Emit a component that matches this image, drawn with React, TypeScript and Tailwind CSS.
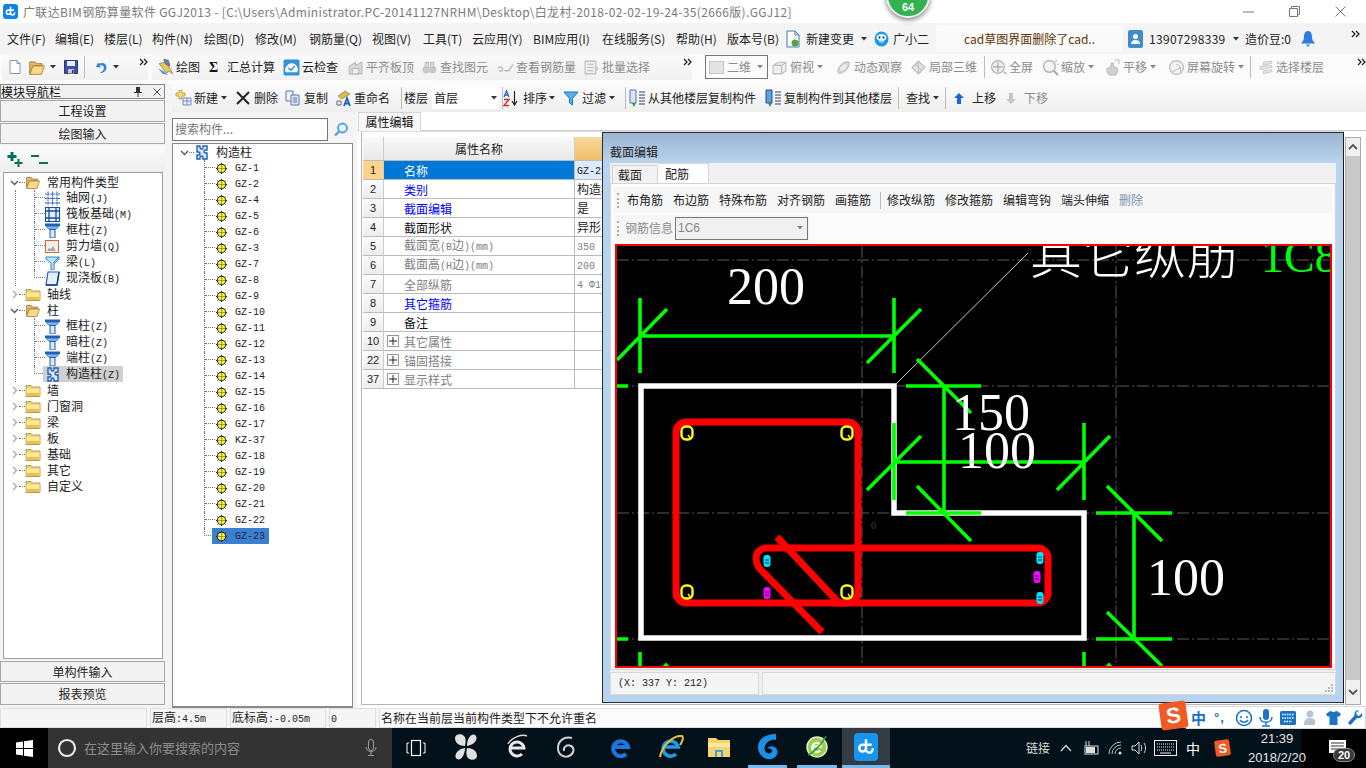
import React from "react";

const FONT = '"Noto Sans CJK SC","Liberation Sans",sans-serif';

function Sim({ t, className = "" }: { t: string; className?: string }) {
  const parts = t.match(/[\u3000-\u9fff]+|[^\u3000-\u9fff]+/g) || [];
  return (
    <span className={"whitespace-nowrap text-[12px] leading-[16px] " + className}>
      {parts.map((p, i) =>
        /[\u3000-\u9fff]/.test(p) ? (
          <span key={i} className="text-[12px]">{p}</span>
        ) : (
          <span key={i} className="text-[10px] font-['Liberation_Mono']">{p}</span>
        )
      )}
    </span>
  );
}

type S = { s?: number };
const Svg = ({ s = 16, children }: S & { children: React.ReactNode }) => (
  <svg width={s} height={s} viewBox="0 0 16 16" className="shrink-0">{children}</svg>
);
const Caret = () => (
  <svg width="6" height="4" viewBox="0 0 6 4" className="shrink-0"><path d="M0 0h6L3 3.5z" fill="#333" /></svg>
);
const CaretG = () => (
  <svg width="6" height="4" viewBox="0 0 6 4" className="shrink-0"><path d="M0 0h6L3 3.5z" fill="#888" /></svg>
);
const More = () => (
  <svg width="9" height="8" viewBox="0 0 9 8" className="shrink-0"><path d="M1 1l3 3-3 3M5 1l3 3-3 3" fill="none" stroke="#222" strokeWidth="1.3" /></svg>
);
const Doc = () => <Svg><path d="M3 1.5h7l3 3v10H3z" fill="#fff" stroke="#8a99a8" /><path d="M10 1.5v3h3" fill="#dde" stroke="#8a99a8" /></Svg>;
const FolderOpen = ({ s = 18 }: S) => (
  <Svg s={s}><path d="M1.5 3.5h5l1 1.5h5v2h-8l-3 7z" fill="#e3b860" stroke="#a57f32" strokeWidth=".8" /><path d="M4.5 7h10l-2.5 7.5H1.5z" fill="#f6d98b" stroke="#a57f32" strokeWidth=".8" /></Svg>
);
const Folder = ({ s = 16 }: S) => (
  <Svg s={s}><path d="M1 3.5h5l1.5 1.5H15v9.5H1z" fill="#f4cf6a" stroke="#a98a3a" strokeWidth=".8" /><path d="M1.5 6.5h13V14h-13z" fill="#fbe9a4" /><path d="M1.5 11h13v3h-13z" fill="#f0bf45" /></Svg>
);
const Save = () => (
  <Svg><path d="M1.5 1.5h13v13h-13z" fill="#3f4fa8" stroke="#2c3575" /><path d="M4 2h8v5H4z" fill="#e8ecf6" /><path d="M5 10h6v4.5H5z" fill="#c0c7d8" /><path d="M9 11h1.5v3H9z" fill="#333" /></Svg>
);
const Undo = () => (
  <Svg><path d="M5 3.5l-2 4.5 5 .5L6.5 6.6C9 5.6 11.5 7 10.8 9.8 10.4 11.4 9 13 7 14c4 .2 6.5-2.5 6.5-5.5C13.5 4.8 9.8 3 6 4.8z" fill="#2e84d6" /></Svg>
);
const Pencil = () => (
  <Svg s={18}><path d="M6 1l4 1 1.5 5-4-1z" fill="#5f7fb3" stroke="#345" strokeWidth=".5" /><path d="M2 5l6 8 3-1 3 2-2-4-2-3-4-3z" fill="#e9c65b" stroke="#7a6d3a" strokeWidth=".6" /><path d="M1 9l4 5 5 1-4-3z" fill="#4a90d9" /></Svg>
);
const Cloud = () => (
  <Svg s={17}><rect x=".5" y=".5" width="15" height="15" rx="1.5" fill="#2f94dc" /><path d="M2 11c0-4 3-7 6-7s6 2.5 6 6.5c0 1-1 2-2 2H4c-1 0-2-.5-2-1.500z" fill="#fff" /><path d="M5 8.500l2.500 2L11 6.500" fill="none" stroke="#2f94dc" strokeWidth="1.400" /></Svg>
);
const GrayIco = ({ v = 0 }: { v?: number }) => (
  <Svg s={17}>
    {v === 0 && <><path d="M2 14V7l6-4v3l6-3v11z" fill="#d8d8d8" stroke="#bbb" /><path d="M5 9h6v5H5z" fill="#eee" stroke="#bbb" /></>}
    {v === 1 && <><circle cx="5" cy="10" r="3.500" fill="#c9c9c9" /><circle cx="11" cy="10" r="3.500" fill="#c9c9c9" /><path d="M4 3h3v5H4zM9 3h3v5H9z" fill="#ddd" stroke="#bbb" /></>}
    {v === 2 && <><path d="M1 9c1-2 3-2 4 0s-1 3-3 2M15 5l-4 6H7" fill="none" stroke="#bbb" strokeWidth="1.300" /></>}
    {v === 3 && <><path d="M2 2h10v12H2z" fill="#eee" stroke="#bbb" /><path d="M4 5h6M4 8h6M4 11h6" stroke="#bbb" /><path d="M12 6l3 3-3 3" fill="#ccc" /></>}
    {v === 4 && <><path d="M2 6l5-3h7v8l-4 3H2zM2 6h8v8M10 6l4-3" fill="#eee" stroke="#bbb" /></>}
    {v === 5 && <><ellipse cx="8" cy="8" rx="7" ry="3.200" transform="rotate(-45 8 8)" fill="#d6d6d6" stroke="#bbb" /><ellipse cx="8" cy="8" rx="3.500" ry="2" transform="rotate(-45 8 8)" fill="#eee" /></>}
    {v === 6 && <><path d="M2 8l6-6 6 6-6 6z" fill="#e4e4e4" stroke="#bbb" /><path d="M5 5l6 6M8 2v12" stroke="#c4c4c4" /></>}
    {v === 7 && <><circle cx="7.500" cy="7.500" r="6" fill="#f0f0f0" stroke="#aaa" /><path d="M7.500 3v9M3 7.500h9M13 12l2.500 2.500" stroke="#aaa" strokeWidth="1.200" /></>}
    {v === 8 && <><circle cx="7" cy="7" r="5.500" fill="#f3f3f3" stroke="#bbb" strokeWidth="1.500" /><path d="M11 11l4 4" stroke="#aaa" strokeWidth="2" /><path d="M12 3l2-2M14 5h2" stroke="#bbb" /></>}
    {v === 9 && <><path d="M5 15c-2-2-3-4-2-6l3-1 1-4 2 .5 0 3 3 .5 1 3-2 4z" fill="#d0d0d0" stroke="#bbb" /><path d="M10 1h4v4" fill="none" stroke="#bbb" /></>}
    {v === 10 && <><circle cx="8" cy="8" r="6.500" fill="#f3f3f3" stroke="#bbb" strokeWidth="1.200" /><path d="M8 5a3 3 0 013 3M4 12l8-4v6" fill="none" stroke="#c5c5c5" /></>}
    {v === 11 && <><path d="M6 3l8-1v2L6 6zM3 7l11-1v2L3 10zM6 11l8-1v2l-8 2z" fill="#e2e2e2" stroke="#bbb" strokeWidth=".6" /></>}
  </Svg>
);
const Sep = () => <div className="w-px h-[22px] bg-[#bdbdbd] shrink-0" />;

function Tool({ icon, label, w, gray, caret }: { icon: React.ReactNode; label: string; w: string; gray?: boolean; caret?: boolean }) {
  return (
    <div className={"flex items-center shrink-0 " + w}>
      <span className="w-[19px] shrink-0">{icon}</span>
      <span className={"text-[12px] whitespace-nowrap " + (gray ? "text-[#8c8c8c]" : "text-[#222]")}>{label}</span>
      {caret && <span className="ml-[3px]">{gray ? <CaretG /> : <Caret />}</span>}
    </div>
  );
}

function Top() {
  const menus: [string, string][] = [
    ["文件(F)", "w-[48px]"], ["编辑(E)", "w-[49px]"], ["楼层(L)", "w-[48px]"], ["构件(N)", "w-[52px]"], ["绘图(D)", "w-[51px]"],
    ["修改(M)", "w-[54px]"], ["钢筋量(Q)", "w-[63px]"], ["视图(V)", "w-[51px]"], ["工具(T)", "w-[49px]"], ["云应用(Y)", "w-[61px]"],
    ["BIM应用(I)", "w-[69px]"], ["在线服务(S)", "w-[74px]"], ["帮助(H)", "w-[51px]"], ["版本号(B)", "w-[60px]"],
  ];
  return (
    <>
      <div className="h-[23px] bg-white flex items-center shrink-0 relative">
        <div className="ml-[3px] w-[15px] h-[15px] rounded-[3px] bg-[#0e84e8] flex items-center justify-center">
          <AppMark s={11} />
        </div>
        <span className="ml-[5px] text-[12px] text-[#7a7a7a] whitespace-nowrap tracking-[0.34px]">广联达BIM钢筋算量软件 GGJ2013 - [C:\Users\Administrator.PC-20141127NRHM\Desktop\白龙村-2018-02-02-19-24-35(2666版).GGJ12]</span>
        <div className="ml-auto flex items-center mr-[20px] gap-[35px]">
          <svg width="11" height="2"><path d="M0 1h11" stroke="#777" /></svg>
          <svg width="11" height="11" viewBox="0 0 11 11"><path d="M2.500 2.500V.5h8v8h-2M.5 2.500h8v8h-8z" fill="none" stroke="#777" /></svg>
          <svg width="11" height="11" viewBox="0 0 11 11"><path d="M.5.5l10 10M10.500.5l-10 10" stroke="#777" /></svg>
        </div>
      </div>
      <div className="h-[31px] bg-[#f4f4f4] flex items-center shrink-0 pl-[7px]">
        {menus.map(([m, w]) => (
          <span key={m} className={"text-[12px] text-[#222] whitespace-nowrap shrink-0 " + w}>{m}</span>
        ))}
        <svg width="16" height="18" viewBox="0 0 16 18" className="shrink-0 ml-[-2px]"><path d="M2 1h8l4 4v12H2z" fill="#fff" stroke="#3d7bb8" /><path d="M10 1v4h4" fill="none" stroke="#3d7bb8" /><circle cx="10" cy="13" r="3.500" fill="#56a23d" /></svg>
        <span className="ml-[5px] w-[48px] text-[12px] text-[#222] whitespace-nowrap shrink-0">新建变更</span>
        <span className="ml-[7px] mr-[7px]"><Caret /></span>
        <svg width="15" height="16" viewBox="0 0 15 16" className="shrink-0"><ellipse cx="7.500" cy="8" rx="7" ry="7.500" fill="#169be8" /><ellipse cx="7.500" cy="6.500" rx="5" ry="3.500" fill="#e8f8ff" /><circle cx="5.500" cy="6.500" r="1" fill="#123" /><circle cx="9.500" cy="6.500" r="1" fill="#123" /><path d="M5 10c1.500 1.500 3.500 1.500 5 0" stroke="#fff" fill="none" /></svg>
        <span className="ml-[4px] w-[36px] text-[12px] text-[#222] whitespace-nowrap shrink-0">广小二</span>
        <div className="ml-[7px] w-[187px] h-[27px] bg-[#fafafa] rounded-[2px] flex items-center justify-center shrink-0">
          <span className="text-[12px] text-[#663300] whitespace-nowrap">cad草图界面删除了cad..</span>
        </div>
        <div className="ml-[5px] w-[15px] h-[18px] bg-[#3e8ecb] rounded-[2px] flex items-center justify-center shrink-0">
          <svg width="11" height="12" viewBox="0 0 11 12"><circle cx="5.500" cy="3.500" r="2.500" fill="#fff" /><path d="M1 11c0-3 2-4 4.500-4S10 8 10 11z" fill="#fff" /></svg>
        </div>
        <span className="ml-[6px] w-[76px] text-[12px] text-[#222] whitespace-nowrap tracking-[0.3px] shrink-0">13907298339</span>
        <span className="ml-[8px] mr-[6px]"><Caret /></span>
        <span className="text-[12px] w-[46px] text-[#222] whitespace-nowrap shrink-0">造价豆:0</span>
        <svg width="14" height="16" viewBox="0 0 14 16" className="ml-[10px] shrink-0"><path d="M7 0c-3 0-4 3-4 6 0 3-1 4-3 6.500h14C12 10 11 9 11 6c0-3-1-6-4-6z" fill="#2e7be0" /><path d="M5 13.500h4L7 16z" fill="#2e7be0" /></svg>
        <span className="ml-[36px] mb-[10px]"><More /></span>
      </div>
      <div className="h-[30px] bg-[#fbfbfb] shrink-0 flex items-center pb-[4px]">
        <div className="flex items-center h-[26px] w-[146px] ml-[2px] bg-gradient-to-b from-[#fafafa] to-[#f1f1f1] rounded-[2px] pl-[5px]">
          <span className="w-[21px]"><Doc /></span>
          <span className="w-[22px]"><FolderOpen /></span>
          <span className="w-[14px]"><Caret /></span>
          <span className="w-[21px]"><Save /></span>
          <Sep />
          <span className="ml-[8px] w-[20px]"><Undo /></span>
          <Caret />
          <span className="ml-[20px] mb-[10px]"><More /></span>
        </div>
        <div className="flex items-center h-[26px] w-[545px] ml-[4px] bg-gradient-to-b from-[#fafafa] to-[#f1f1f1] rounded-[2px] pl-[5px]">
          <Tool icon={<Pencil />} label="绘图" w="w-[52px]" />
          <div className="flex items-center shrink-0 w-[74px]">
            <span className="w-[18px] text-[14px] font-bold text-[#111] font-['Liberation_Serif']">Σ</span>
            <span className="text-[12px] text-[#222] whitespace-nowrap">汇总计算</span>
          </div>
          <Tool icon={<Cloud />} label="云检查" w="w-[64px]" />
          <Tool icon={<GrayIco v={0} />} label="平齐板顶" w="w-[74px]" gray />
          <Tool icon={<GrayIco v={1} />} label="查找图元" w="w-[76px]" gray />
          <Tool icon={<GrayIco v={2} />} label="查看钢筋量" w="w-[86px]" gray />
          <Tool icon={<GrayIco v={3} />} label="批量选择" w="w-[100px]" gray />
          <span className="mb-[10px]"><More /></span>
        </div>
        <div className="ml-[13px] w-[63px] h-[24px] border border-[#777] flex items-center pl-[3px] shrink-0">
          <span className="w-[15px] h-[13px] bg-[#e3e3e3] border border-[#c4c4c4] shrink-0" />
          <span className="ml-[3px] text-[12px] text-[#8c8c8c]">二维</span>
          <span className="ml-[6px]"><CaretG /></span>
        </div>
        <div className="flex items-center ml-[3px]">
          <Tool icon={<GrayIco v={4} />} label="俯视" w="w-[64px]" gray caret />
          <Tool icon={<GrayIco v={5} />} label="动态观察" w="w-[75px]" gray />
          <Tool icon={<GrayIco v={6} />} label="局部三维" w="w-[74px]" gray />
          <Sep />
          <span className="w-[5px]" />
          <Tool icon={<GrayIco v={7} />} label="全屏" w="w-[52px]" gray />
          <Tool icon={<GrayIco v={8} />} label="缩放" w="w-[62px]" gray caret />
          <Tool icon={<GrayIco v={9} />} label="平移" w="w-[64px]" gray caret />
          <Tool icon={<GrayIco v={10} />} label="屏幕旋转" w="w-[82px]" gray caret />
          <Sep />
          <span className="w-[6px]" />
          <Tool icon={<GrayIco v={11} />} label="选择楼层" w="w-[100px]" gray />
          <span className="mb-[10px]"><More /></span>
        </div>
      </div>
    </>
  );
}

function AppMark({ s = 11 }: { s?: number }) {
  return (
    <svg width={s} height={s} viewBox="0 0 16 16">
      <path d="M8 1v8M8 9a3 3 0 01-6 0 3 3 0 013-3h8M8 9c0 2 1 4 3 4s3-2 3-4" fill="none" stroke="#fff" strokeWidth="2.200" />
    </svg>
  );
}

const SideBtn = ({ t, h }: { t: string; h: string }) => (
  <div className={"w-[165px] bg-[#f2f2f2] border border-[#a8a8a8] flex items-center justify-center text-[12px] text-[#222] shrink-0 " + h}>{t}</div>
);

const TCol = () => (
  <svg width="15" height="15" viewBox="0 0 15 15" className="shrink-0"><path d="M0 .5h15v2.500H0z" fill="#1f5fb8" /><path d="M1 3.500h13l-3 3H4z" fill="#7fb0ea" stroke="#1f5fb8" strokeWidth=".6" /><path d="M5 6.500h5V15H5z" fill="#d8e8fa" stroke="#1f5fb8" /></svg>
);
const Puzzle = () => (
  <svg width="15" height="15" viewBox="0 0 15 15" className="shrink-0"><path d="M3 1h3v1.500a1.500 1.500 0 003 0V1h4v4h-1.500a1.500 1.500 0 000 3H13v6H9v-1.500a1.500 1.500 0 00-3 0V14H3v-4h1.500a1.500 1.500 0 000-3H3z" fill="#dbe9f8" stroke="#1f5fb8" strokeWidth="1.400" /></svg>
);
const Grid1 = () => (
  <svg width="15" height="15" viewBox="0 0 15 15" className="shrink-0"><path d="M3 .5v14M7.500 .5v14M12 .5v14M0 3h15M0 7.500h15M0 12h15" stroke="#2b63b5" strokeDasharray="2 .6" /></svg>
);
const Raft = () => (
  <svg width="15" height="15" viewBox="0 0 15 15" className="shrink-0"><rect x=".5" y=".5" width="14" height="14" fill="#e7f0fa" stroke="#174f9f" /><path d="M.5 4h14M.5 11h14M4 .5v14M11 .5v14" stroke="#174f9f" strokeWidth="1.300" /></svg>
);
const Wall = () => (
  <svg width="15" height="15" viewBox="0 0 15 15" className="shrink-0"><rect x=".5" y="1.500" width="13" height="12" fill="#f4efe9" stroke="#c66b3d" /><path d="M2 12l2-3 2 1 2-3 3 5z" fill="#a9a9a9" /></svg>
);
const Beam = () => (
  <svg width="15" height="15" viewBox="0 0 15 15" className="shrink-0"><path d="M1 2h13v2L9 9v6H6V8L1 4z" fill="#bfe1f7" stroke="#2c87c9" /><path d="M14 2L8 8" stroke="#2c87c9" /></svg>
);
const Slab = () => (
  <svg width="15" height="15" viewBox="0 0 15 15" className="shrink-0"><path d="M3 1h11l-2 13H1z" fill="#e6f0fb" stroke="#1f5fb8" strokeWidth="1.200" /><path d="M1 14h11l2-13" fill="none" stroke="#0f3f8f" strokeWidth="1.500" /></svg>
);
const Chevron = ({ open }: { open?: boolean }) => (
  <svg width="9" height="9" viewBox="0 0 9 9" className="shrink-0">
    {open ? <path d="M1 3l3.500 3.500L8 3" fill="none" stroke="#555" strokeWidth="1.300" /> : <path d="M3 1l3.500 3.500L3 8" fill="none" stroke="#aaa" strokeWidth="1.300" />}
  </svg>
);
const Gear = () => (
  <svg width="11" height="11" viewBox="0 0 11 11" className="shrink-0">
    <circle cx="5.500" cy="5.500" r="4.700" fill="#222" />
    <path d="M5.500 0v11M0 5.500h11M1.500 1.500l8 8M9.500 1.500l-8 8" stroke="#222" />
    <circle cx="5.500" cy="5.500" r="3.700" fill="#f8f23a" />
    <path d="M5.500 2v7M2 5.500h7" stroke="#555" strokeWidth=".5" />
  </svg>
);

function Branch({ last }: { last?: boolean }) {
  return (
    <div className={"w-[11px] h-[16px] shrink-0 flex flex-col " + (last ? "" : "border-l border-dotted border-[#777]")}>
      <div className={"h-[8px] border-b border-dotted border-[#777] " + (last ? "border-l" : "")} />
    </div>
  );
}
function Kid({ icon, t, last, sel }: { icon: React.ReactNode; t: string; last?: boolean; sel?: boolean }) {
  return (
    <div className="h-[16px] flex items-center">
      <Branch last={last} />
      <div className={"flex items-center h-[16px] pr-[3px] " + (sel ? "bg-[#d0d0d0] -ml-[2px] pl-[2px]" : "")}>
        {icon}
        <Sim t={t} className="ml-[6px] text-[#222]" />
      </div>
    </div>
  );
}
function Parent({ t, open, kids }: { t: string; open?: boolean; kids?: React.ReactNode }) {
  return (
    <>
      <div className="h-[16px] flex items-center pl-[6px]">
        <Chevron open={open} />
        <span className="w-[6px] h-px border-b border-dotted border-[#777]" />
        {open ? <FolderOpen s={16} /> : <Folder />}
        <span className="ml-[6px] text-[12px] text-[#222] whitespace-nowrap">{t}</span>
      </div>
      {kids && <div className="ml-[11px] border-l border-dotted border-[#777] pl-[18px]">{kids}</div>}
    </>
  );
}

function LeftCol() {
  return (
    <div className="w-[165px] shrink-0 flex flex-col h-full">
      <div className="h-[15px] border border-[#888] bg-[#f0f0f0] flex items-center shrink-0">
        <span className="text-[12px] leading-[14px] text-[#111] whitespace-nowrap">模块导航栏</span>
        <svg width="8" height="10" viewBox="0 0 8 10" className="ml-auto"><path d="M2 0h4v5h2v1H4.500v4h-1V6H0V5h2z" fill="#333" /></svg>
        <svg width="8" height="8" viewBox="0 0 8 8" className="ml-[11px] mr-[3px]"><path d="M.5.5l7 7M7.500.5l-7 7" stroke="#444" /></svg>
      </div>
      <div className="h-px shrink-0" />
      <SideBtn t="工程设置" h="h-[22px]" />
      <div className="h-px shrink-0" />
      <SideBtn t="绘图输入" h="h-[21px]" />
      <div className="h-[26px] mt-[2px] shrink-0 bg-gradient-to-b from-[#fbfbfb] to-[#eeeeee] flex items-center pl-[7px] gap-[7px]">
        <svg width="17" height="17" viewBox="0 0 17 17"><path d="M3.500 1h3v3h3v3h-3v3h-3V7h-3V4h3z" fill="#06705e" /><path d="M10.500 8h2v3h3v2h-3v3h-2v-3h-3v-2h3z" fill="#06705e" /></svg>
        <svg width="17" height="17" viewBox="0 0 17 17"><path d="M0 4h8v2H0zM8 11h9v2H8z" fill="#06705e" /></svg>
      </div>
      <div className="h-[487px] ml-[3px] w-[160px] border border-[#a0a0a0] bg-white pt-[1px] shrink-0 overflow-hidden">
        <Parent t="常用构件类型" open kids={<>
          <Kid icon={<Grid1 />} t="轴网(J)" />
          <Kid icon={<Raft />} t="筏板基础(M)" />
          <Kid icon={<TCol />} t="框柱(Z)" />
          <Kid icon={<Wall />} t="剪力墙(Q)" />
          <Kid icon={<Beam />} t="梁(L)" />
          <Kid icon={<Slab />} t="现浇板(B)" last />
        </>} />
        <Parent t="轴线" />
        <Parent t="柱" open kids={<>
          <Kid icon={<TCol />} t="框柱(Z)" />
          <Kid icon={<TCol />} t="暗柱(Z)" />
          <Kid icon={<TCol />} t="端柱(Z)" />
          <Kid icon={<Puzzle />} t="构造柱(Z)" last sel />
        </>} />
        {["墙", "门窗洞", "梁", "板", "基础", "其它", "自定义"].map((t) => <Parent key={t} t={t} />)}
      </div>
      <div className="h-[2px] shrink-0" />
      <SideBtn t="单构件输入" h="h-[21px]" />
      <div className="h-px shrink-0" />
      <SideBtn t="报表预览" h="h-[22px]" />
    </div>
  );
}

function Toolbar2() {
  return (
    <div className="h-[28px] shrink-0 bg-gradient-to-b from-[#fbfbfb] to-[#efefef] flex items-center pl-[3px] mb-0">
      <Tool icon={<svg width="17" height="16" viewBox="0 0 17 16"><path d="M4 0h3v3h3v3H7v3H4V6H1V3h3z" fill="#f2dc6a" stroke="#9a8530" strokeWidth=".6" /><path d="M8 8h8v7H8z" fill="#eef4fb" stroke="#6d8fc0" /><path d="M8 11h8M12 8v7" stroke="#6d8fc0" /></svg>} label="新建" w="w-[60px]" caret />
      <Tool icon={<svg width="16" height="16" viewBox="0 0 16 16"><path d="M2 2l12 12M14 2L2 14" stroke="#222" strokeWidth="2" /></svg>} label="删除" w="w-[50px]" />
      <Tool icon={<svg width="16" height="16" viewBox="0 0 16 16"><path d="M1 1h7v10H1z" fill="#eef3fb" stroke="#5979ad" /><path d="M6 5h8v10H6z" fill="#dce8f8" stroke="#5979ad" /><path d="M8 8h4M8 10h4M8 12h4" stroke="#5979ad" /></svg>} label="复制" w="w-[50px]" />
      <Tool icon={<svg width="17" height="17" viewBox="0 0 17 17"><path d="M3 6l7-5 5 3-8 5z" fill="#d8ba54" stroke="#8d762c" strokeWidth=".6" /><path d="M9 16l3-8 3 8M10 13.500h4" fill="none" stroke="#1f5fb8" strokeWidth="1.800" /><path d="M2 11h4v4H2z" fill="none" stroke="#666" /></svg>} label="重命名" w="w-[66px]" />
      <Sep />
      <span className="ml-[2px] text-[12px] text-[#222] w-[28px]">楼层</span>
      <div className="w-[67px] h-[22px] bg-white flex items-center shrink-0">
        <span className="text-[12px] text-[#222] ml-[2px]">首层</span>
        <span className="ml-auto mr-[2px]"><Caret /></span>
      </div>
      <span className="w-[3px]" />
      <Sep />
      <div className="flex items-center w-[60px] shrink-0">
        <svg width="17" height="17" viewBox="0 0 17 17" className="shrink-0"><path d="M1 7l2.500-6L6 7M2 5h3" fill="none" stroke="#2d62b7" strokeWidth="1.300" /><path d="M1 9.500h5L1 15.500h5" fill="none" stroke="#c03228" strokeWidth="1.300" /><path d="M11.500 1v13M9 11l2.500 4 2.500-4" fill="none" stroke="#222" strokeWidth="1.200" /></svg>
        <span className="ml-[3px] text-[12px] text-[#222]">排序</span>
        <span className="ml-[2px]"><Caret /></span>
      </div>
      <Tool icon={<svg width="16" height="16" viewBox="0 0 16 16"><path d="M1 2h14L9.500 8.500V15l-3-2V8.500z" fill="#55b3ea" stroke="#1c76b8" /></svg>} label="过滤" w="w-[62px]" caret />
      <Sep />
      <span className="w-[3px]" />
      <Tool icon={<svg width="18" height="18" viewBox="0 0 18 18"><path d="M1 1h6v13H1z" fill="#d8e6f8" stroke="#5979ad" /><path d="M3 14l2 4 2-4z" fill="#2e9c42" /><path d="M10 3h6M10 6h6M10 9h6M10 12h6M10 15h6" stroke="#6d7e96" strokeWidth="1.500" /></svg>} label="从其他楼层复制构件" w="w-[136px]" />
      <Tool icon={<svg width="18" height="18" viewBox="0 0 18 18"><path d="M1 1h6v13H1z" fill="#5aa0e8" stroke="#23508f" /><path d="M3 14l2 4 2-4z" fill="#2e9c42" /><path d="M10 3h6M10 6h6M10 9h6M10 12h6M10 15h6" stroke="#6d7e96" strokeWidth="1.500" /></svg>} label="复制构件到其他楼层" w="w-[133px]" />
      <Sep />
      <span className="ml-[7px] text-[12px] text-[#222]">查找</span>
      <span className="ml-[3px] mr-[6px]"><Caret /></span>
      <Sep />
      <span className="w-[7px]" />
      <Tool icon={<svg width="12" height="13" viewBox="0 0 12 13"><path d="M6 1l5 5H8v6H4V6H1z" fill="#1967cf" /></svg>} label="上移" w="w-[52px]" />
      <Tool icon={<svg width="12" height="13" viewBox="0 0 12 13"><path d="M6 12l5-5H8V1H4v6H1z" fill="#c7c7c7" /></svg>} label="下移" w="w-[50px]" gray />
    </div>
  );
}

function MiddleTree() {
  const list = ["GZ-1","GZ-2","GZ-4","GZ-5","GZ-6","GZ-3","GZ-7","GZ-8","GZ-9","GZ-10","GZ-11","GZ-12","GZ-13","GZ-14","GZ-15","GZ-16","GZ-17","KZ-37","GZ-18","GZ-19","GZ-20","GZ-21","GZ-22","GZ-23"];
  return (
    <div className="w-[183px] shrink-0 flex flex-col h-full">
      <div className="h-[31px] flex items-center shrink-0 pt-[3px]">
        <div className="w-[156px] h-[23px] border border-[#777] bg-white flex items-center pl-[2px] text-[12px] text-[#777]">搜索构件...</div>
        <div className="flex-1 flex justify-center">
          <svg width="15" height="15" viewBox="0 0 15 15"><circle cx="8.500" cy="6" r="4.500" fill="#e9f5fc" stroke="#4ba3da" strokeWidth="1.800" /><path d="M5 9.500L1 13.500" stroke="#4ba3da" strokeWidth="2.400" /></svg>
        </div>
      </div>
      <div className="flex-1 border border-[#8a8a8a] border-b-2 bg-white overflow-hidden w-[181px]">
        <div className="h-[16px] flex items-center pl-[7px]">
          <Chevron open />
          <span className="w-[5px] border-b border-dotted border-[#777]" />
          <Puzzle />
          <span className="ml-[7px] text-[12px] text-[#222]">构造柱</span>
        </div>
        <div className="ml-[31px]">
          {list.map((g, i) => {
            const last = i === list.length - 1;
            return (
              <div key={g} className="h-[16px] flex items-center">
                <Branch last={last} />
                <div className={"h-[16px] flex items-center w-[57px] -ml-[3px] pl-[4px] " + (last ? "bg-[#3b7fd0]" : "")}>
                  <Gear />
                  <span className={"ml-[8px] text-[10px] font-['Liberation_Mono'] " + (last ? "text-[#1a2a40]" : "text-[#222]")}>{g}</span>
                </div>
              </div>
            );
          })}
        </div>
      </div>
    </div>
  );
}

function Props() {
  const rows: { n: string; name: string; val?: string; cls: string; plus?: boolean; valCls?: string }[] = [
    { n: "1", name: "名称", val: "GZ-23", cls: "text-white" },
    { n: "2", name: "类别", val: "构造柱", cls: "text-[#0000ff]" },
    { n: "3", name: "截面编辑", val: "是", cls: "text-[#0000ff]" },
    { n: "4", name: "截面形状", val: "异形", cls: "text-[#111]" },
    { n: "5", name: "截面宽(B边)(mm)", val: "350", cls: "text-[#808080]", valCls: "text-[#808080]" },
    { n: "6", name: "截面高(H边)(mm)", val: "200", cls: "text-[#808080]", valCls: "text-[#808080]" },
    { n: "7", name: "全部纵筋", val: "4 Φ14", cls: "text-[#808080]", valCls: "text-[#808080]" },
    { n: "8", name: "其它箍筋", cls: "text-[#0000ff]" },
    { n: "9", name: "备注", cls: "text-[#111]" },
    { n: "10", name: "其它属性", cls: "text-[#808080]", plus: true },
    { n: "22", name: "锚固搭接", cls: "text-[#808080]", plus: true },
    { n: "37", name: "显示样式", cls: "text-[#808080]", plus: true },
  ];
  return (
    <div className="flex-1 flex flex-col min-w-0">
      <div className="h-[19px] shrink-0 flex border-b border-[#ccc] bg-white pr-[4px] pl-[1px]">
        <div className="w-[63px] h-[20px] bg-[#f7f7f7] border border-[#d5d5d5] border-b-white flex items-center justify-center text-[12px] text-[#111]">属性编辑</div>
      </div>
      <div className="flex-1 flex">
        <div className="w-[983px] border border-[#b5b5b5] border-t-[#ddd] bg-white pl-[1px] pt-[5px] mb-[3px] ml-[4px] shrink-0 overflow-hidden">
          <div className="flex h-[24px] border-b border-[#bbb]">
            <div className="w-[21px] bg-gradient-to-b from-[#fafafa] to-[#e8e8e8] border-r border-[#ccc]" />
            <div className="w-[191px] bg-gradient-to-b from-[#fafafa] to-[#e8e8e8] border-r border-[#ccc] flex items-center justify-center text-[12px] text-[#222]">属性名称</div>
            <div className="w-[120px] bg-gradient-to-b from-[#f9d99c] to-[#efbd68]" />
          </div>
          {rows.map((r, i) => (
            <div key={r.n} className="flex h-[19px] border-b border-[#bbb]">
              <div className={"w-[21px] border-r border-[#ccc] flex items-center justify-center text-[#222] " + (i === 0 ? "bg-[#fbd48b]" : "bg-gradient-to-b from-[#fbfbfb] to-[#ececec]")}>
                <span className="text-[11px] font-['Liberation_Sans']">{r.n}</span>
              </div>
              <div className={"w-[191px] border-r border-[#bbb] flex items-center " + (i === 0 ? "bg-[#0078d7]" : "bg-white")}>
                {r.plus ? (
                  <div className="w-[12px] h-[12px] border border-[#999] ml-[3px] mr-[5px] flex items-center justify-center shrink-0">
                    <svg width="8" height="8" viewBox="0 0 8 8"><path d="M4 0v8M0 4h8" stroke="#222" /></svg>
                  </div>
                ) : <span className="w-[20px]" />}
                <Sim t={r.name} className={"mt-[1px] " + r.cls} />
              </div>
              <div className={"w-[120px] flex items-center pl-[2px] " + (i === 0 ? "bg-[#dcebf9]" : "bg-white")}>
                {r.val && <Sim t={r.val} className={r.valCls || "text-[#222]"} />}
              </div>
            </div>
          ))}
        </div>
      </div>
    </div>
  );
}

function Scrollbar() {
  return (
    <div className="absolute left-[1345px] top-[137px] w-[16px] h-[568px] border border-[#aaa] bg-[#f0f0f0] flex flex-col items-center">
      <div className="h-[18px] flex items-center">
        <svg width="10" height="6" viewBox="0 0 10 6"><path d="M1 5l4-4 4 4" fill="none" stroke="#555" strokeWidth="1.800" /></svg>
      </div>
      <div className="w-full flex-1 bg-[#c9c9c9]" />
      <div className="h-[24px] flex items-center">
        <svg width="10" height="6" viewBox="0 0 10 6"><path d="M1 1l4 4 4-4" fill="none" stroke="#555" strokeWidth="1.800" /></svg>
      </div>
    </div>
  );
}

const DimLines = () => (
  <g stroke="#00ff00" fill="none" strokeWidth="3.600">
    <path d="M640 336H894M640 298V373M894 298V373M617 360L667 309M867 363L921 309" />
    <path d="M944 386V513M906 386H981M906 513H981M917 359L971 413M917 486L971 541" />
    <path d="M894 462H1084M894 423V500M1084 423V500M867 490L921 436M1057 490L1110 436" />
    <path d="M1134 513V639M1096 513H1172M1096 639H1172M1107 486L1162 541M1107 612L1162 666" />
    <path d="M617 386H628M617 639H628M640 652V668M1084 652V668" />
    <path d="M662 668l4-4 4 4M1105 668l4-4 4 4" strokeWidth="2" />
  </g>
);

function BigBar({ x, y }: { x: number; y: number }) {
  return (
    <g fill="none" stroke="#ffff00" strokeWidth="2.400">
      <rect x={x - 5.5} y={y - 6.5} width={11} height={13} rx={4.5} />
      <path d={`M${x + 1} ${y + 2}l3 4`} strokeWidth="1.400" />
    </g>
  );
}
function SmallBar({ x, y, c }: { x: number; y: number; c: string }) {
  return (
    <g>
      <rect x={x - 3.5} y={y - 6} width={7} height={12} rx={3} fill={c} />
      <path d={`M${x - 2} ${y - 1}h4M${x - 2} ${y + 2}h4`} stroke="#123" strokeWidth="1" />
    </g>
  );
}

function Canvas() {
  return (
    <div className="mt-[3px] ml-[4px] w-[717px] h-[424px] border-2 border-[#ff0000] bg-black overflow-hidden shrink-0">
      <svg width="713" height="420" viewBox="617 246 713 420" className="block">
        <g stroke="#5a5a5a" strokeWidth="1" strokeDasharray="12 3 2 3">
          <path d="M617 260H1330M617 386H1330M617 513H1330M617 639H1330M862 246V666M1116 246V666" />
        </g>
        <path d="M641 386H894V513H1084V638H641Z" fill="none" stroke="#fff" strokeWidth="5.500" />
        <path d="M896 384L1028 253" stroke="#fff" strokeWidth=".8" />
        <DimLines />
        <path d="M686 422H848a10 10 0 0110 10V593a10 10 0 01-10 10H686a10 10 0 01-10-10V432a10 10 0 0110-10Z" fill="none" stroke="#ff0000" strokeWidth="7" />
        <path d="M838 603H1038a10 10 0 0010-10V558a10 10 0 00-10-10H766a10 10 0 00-10 10c0 4 1 7 3 10L822 632" fill="none" stroke="#ff0000" strokeWidth="7" />
        <path d="M777 537L838 602" stroke="#ff0000" strokeWidth="7" />
        <BigBar x={687} y={433} />
        <BigBar x={847} y={433} />
        <BigBar x={687} y={592} />
        <BigBar x={847} y={592} />
        <SmallBar x={767} y={561} c="#00e5ff" />
        <SmallBar x={1040} y={558} c="#00e5ff" />
        <SmallBar x={1040} y={598} c="#00e5ff" />
        <SmallBar x={1037} y={577} c="#ff00ff" />
        <SmallBar x={767} y={593} c="#ff00ff" />
        <g fill="#fff" fontFamily="Liberation Serif" fontSize="52">
          <text x="727" y="304">200</text>
          <text x="952" y="430">150</text>
          <text x="958" y="468">100</text>
          <text x="1147" y="595">100</text>
        </g>
        <text x="1030" y="274" fill="#fff" fontSize="52" fontFamily="Noto Sans CJK SC" textLength="208" fontWeight="300">其它纵筋</text>
        <text x="1261" y="272" fill="#00ff00" fontSize="46" fontFamily="Liberation Serif">1C8</text>
        <text x="871" y="529" fill="#444" fontSize="10" fontFamily="Liberation Serif">0</text>
      </svg>
    </div>
  );
}

function Dialog() {
  const tools: [string, string][] = [["布角筋", "w-[46px]"], ["布边筋", "w-[46px]"], ["特殊布筋", "w-[58px]"], ["对齐钢筋", "w-[58px]"], ["画箍筋", "w-[45px]"]];
  const tools2: [string, string][] = [["修改纵筋", "w-[58px]"], ["修改箍筋", "w-[58px]"], ["编辑弯钩", "w-[58px]"], ["端头伸缩", "w-[58px]"]];
  return (
    <div className="absolute left-[602px] top-[132px] w-[742px] h-[571px] border border-[#2c2c2c] border-r-[#1c1c1c] flex flex-col bg-[#b8d3ee] px-[7px] pb-[7px]">
      <div className="h-[30px] -mx-[7px] px-[7px] shrink-0 bg-gradient-to-b from-[#9ab5d3] to-[#bbd3ec] flex items-center pt-[7px]">
        <span className="text-[12px] text-[#222]">截面编辑</span>
      </div>
      <div className="h-[20px] bg-[#f0f0f0] flex items-end shrink-0 pl-[2px]">
        <div className="w-[46px] h-[18px] bg-[#f2f2f2] border border-[#d4d4d4] border-b-0 flex items-center pl-[5px] text-[12px] text-[#222]">截面</div>
        <div className="w-[51px] h-[20px] bg-white border-t border-r border-[#d4d4d4] flex items-center pl-[7px] text-[12px] text-[#222]">配筋</div>
      </div>
      <div className="h-[487px] bg-[#fbfbfb] border border-[#d4d4d4] flex flex-col shrink-0">
        <div className="mt-[3px] ml-[3px] mr-[3px] h-[26px] bg-[#f6f6f6] flex items-center shrink-0">
          <div className="w-[3px] h-[15px] ml-[3px] border-l-2 border-dotted border-[#aaa]" />
          <span className="w-[7px]" />
          {tools.map(([t, w]) => <span key={t} className={"text-[12px] text-[#222] shrink-0 " + w}>{t}</span>)}
          <span className="w-px h-[17px] bg-[#bbb] shrink-0 mr-[6px]" />
          {tools2.map(([t, w]) => <span key={t} className={"text-[12px] text-[#222] shrink-0 " + w}>{t}</span>)}
          <span className="text-[12px] text-[#7f93b3] shrink-0">删除</span>
        </div>
        <div className="mt-[2px] ml-[3px] w-[195px] h-[26px] bg-[#f6f6f6] flex items-center shrink-0">
          <div className="w-[3px] h-[15px] ml-[3px] border-l-2 border-dotted border-[#aaa]" />
          <span className="ml-[5px] w-[50px] text-[12px] text-[#8c8c8c]">钢筋信息</span>
          <div className="w-[133px] h-[23px] border border-[#777] bg-[#f0f0f0] flex items-center pl-[2px]">
            <span className="text-[12px] text-[#888] font-['Liberation_Sans']">1C6</span>
            <span className="ml-auto mr-[4px]"><CaretG /></span>
          </div>
        </div>
        <Canvas />
      </div>
      <div className="h-[2px] shrink-0 bg-[#f0f0f0]" />
      <div className="h-[23px] shrink-0 bg-[#f0f0f0] flex">
        <div className="w-[149px] bg-[#f4f4f4] border border-[#d8d8d8] flex items-center pl-[7px]">
          <span className="text-[10px] font-['Liberation_Mono'] text-[#222] whitespace-nowrap">(X: 337 Y: 212)</span>
        </div>
        <div className="ml-[3px] flex-1 bg-[#f4f4f4] border border-[#d8d8d8] flex items-end justify-end pr-[1px] pb-[1px]">
          <svg width="10" height="10" viewBox="0 0 10 10"><path d="M7 1h2v2H7zM4 4h2v2H4zM7 4h2v2H7zM1 7h2v2H1zM4 7h2v2H4zM7 7h2v2H7z" fill="#bbb" /></svg>
        </div>
      </div>
    </div>
  );
}

function StatusBar() {
  return (
    <div className="h-[20px] shrink-0 bg-[#f5f5f5] flex items-center gap-[3px] pr-0 relative">
      <div className="w-[147px] h-[20px] border border-[#e0e0e0]" />
      <div className="w-[77px] h-[20px] border border-[#e0e0e0] flex items-center pl-[1px]"><Sim t="层高:4.5m" className="text-[#222]" /></div>
      <div className="w-[96px] h-[20px] border border-[#e0e0e0] flex items-center pl-[1px]"><Sim t="底标高:-0.05m" className="text-[#222]" /></div>
      <div className="w-[47px] h-[20px] border border-[#e0e0e0] flex items-center pl-[1px]"><Sim t="0" className="text-[#222]" /></div>
      <div className="flex-1 h-[20px] border border-[#e0e0e0] flex items-center pl-[1px] text-[12px] text-[#222] whitespace-nowrap bg-[#fbfbfb]">名称在当前层当前构件类型下不允许重名</div>
    </div>
  );
}

function Sogou() {
  return (
    <div className="absolute left-[1160px] top-[701px] w-[206px] h-[28px] flex items-end">
      <div className="w-[27px] h-[27px] bg-[#f15a22] rounded-[3px] rotate-[-8deg] flex items-center justify-center shrink-0 text-white font-bold text-[22px] leading-none font-['Liberation_Sans'] z-10">S</div>
      <div className="flex-1 h-[23px] bg-white border border-[#ddd] border-l-0 flex items-center pl-[5px] -ml-[1px] gap-[5px]">
        <span className="text-[15px] font-bold text-[#1a73c9] leading-none w-[18px]">中</span>
        <span className="text-[13px] font-bold text-[#1a73c9] leading-none w-[16px] font-['Liberation_Sans'] tracking-[1px]">°,</span>
        <svg width="18" height="18" viewBox="0 0 18 18" className="shrink-0"><circle cx="9" cy="9" r="7.500" fill="none" stroke="#1a73c9" strokeWidth="1.600" /><path d="M6 7v2M12 7v2" stroke="#1a73c9" strokeWidth="1.600" /><path d="M5 11c2 3 6 3 8 0" fill="none" stroke="#1a73c9" strokeWidth="1.400" /></svg>
        <svg width="14" height="18" viewBox="0 0 14 18" className="shrink-0 ml-[1px]"><rect x="4" y="0" width="6" height="11" rx="3" fill="#1a73c9" /><path d="M1 8c0 7 12 7 12 0M7 13v3M3 17h8" fill="none" stroke="#1a73c9" strokeWidth="1.500" /></svg>
        <svg width="16" height="14" viewBox="0 0 16 14" className="shrink-0 ml-[2px]"><rect width="16" height="14" rx="1.500" fill="#1a73c9" /><path d="M2 3.500h12M2 7h12M4 10.500h8" stroke="#fff" strokeDasharray="1.500 1" strokeWidth="1.400" /></svg>
        <svg width="16" height="16" viewBox="0 0 16 16" className="shrink-0 ml-[2px]"><circle cx="7" cy="4" r="3.500" fill="#b7c4d2" /><path d="M1 14c0-5 3-6 6-6s4 1 5 2v5H1z" fill="#b7c4d2" /></svg>
        <svg width="15" height="15" viewBox="0 0 15 15" className="shrink-0 ml-[2px]"><path d="M4 1l3.500 1L11 1l4 3-2 3-1.500-1v9h-8V6L2 7 0 4z" fill="#1a73c9" /></svg>
        <svg width="15" height="16" viewBox="0 0 15 16" className="shrink-0 ml-[2px]"><path d="M14 3l-3 3-2-1-1-2 3-3C8 0 6 2 6.500 5.500L.5 12c-1 1 1 3.500 2.500 2.500l6-6.500C12.500 9 15 6.500 14 3z" fill="#1a73c9" /></svg>
      </div>
    </div>
  );
}

function TaskIcon({ children, active, line, w }: { children: React.ReactNode; active?: boolean; line?: string; w: string }) {
  return (
    <div className={"h-[40px] flex flex-col items-center shrink-0 " + w + " " + (active ? "bg-[#333c42]" : "")}>
      <div className="flex-1 flex items-center justify-center">{children}</div>
      <div className={"w-full h-[3px] " + (line || "")} />
    </div>
  );
}

function Taskbar() {
  return (
    <div className="h-[40px] shrink-0 flex bg-[#03121a] overflow-hidden">
      <div className="w-[48px] bg-black flex items-center justify-center shrink-0">
        <svg width="17" height="17" viewBox="0 0 17 17"><path d="M0 2.500l7-1V8H0zM8 1.300L17 0v8H8zM0 9h7v6.500l-7-1zM8 9h9v8l-9-1.300z" fill="#fff" /></svg>
      </div>
      <div className="w-[344px] bg-[#333333] flex items-center shrink-0 pl-[9px]">
        <svg width="20" height="20" viewBox="0 0 20 20" className="shrink-0"><circle cx="10" cy="10" r="8" fill="none" stroke="#e8e8e8" strokeWidth="2.200" /></svg>
        <span className="ml-[7px] text-[13px] text-[#8d8d8d] whitespace-nowrap">在这里输入你要搜索的内容</span>
        <svg width="12" height="18" viewBox="0 0 12 18" className="ml-[125px] shrink-0"><rect x="3.500" y=".5" width="5" height="11" rx="2.500" fill="none" stroke="#999" /><path d="M1 8c0 6 10 6 10 0M6 13v3M3 16.500h6" fill="none" stroke="#999" /></svg>
      </div>
      <div className="w-[48px] flex items-center justify-center shrink-0">
        <svg width="20" height="18" viewBox="0 0 20 18"><rect x="5.500" y="1.500" width="9" height="15" fill="none" stroke="#fff" strokeWidth="1.200" /><path d="M3 4H1v10h2M17 4h2v10h-2" fill="none" stroke="#fff" /></svg>
      </div>
      <div className="flex items-center ml-[1px]">
        <TaskIcon w="w-[50px]">
          <svg width="22" height="28" viewBox="0 0 22 28"><g fill="#e0e0e0"><path d="M10 13C3 13 0 9 0 5c0-4 6-5 9-2 2 2 2 6 1 10zM12 13c0-7 4-13 8-11 4 3 0 10-8 11zM12 15c7 0 10 4 10 8 0 4-6 5-9 2-2-2-2-6-1-10zM10 15c0 7-4 13-8 11-4-3 0-10 8-11z" /></g></svg>
        </TaskIcon>
        <TaskIcon w="w-[52px]">
          <svg width="22" height="26" viewBox="0 0 22 26"><path d="M5 14H18A7 7 0 1 0 16 20" fill="none" stroke="#e8e8e8" strokeWidth="3" /><path d="M2 10C6 3 16 0 21 2" fill="none" stroke="#ddd" strokeWidth="1.500" /></svg>
        </TaskIcon>
        <TaskIcon w="w-[46px]">
          <svg width="20" height="24" viewBox="0 0 20 24"><path d="M16 3C8 1 2 6 2 13s6 10 11 8 6-8 2-10-8 1-7 5" fill="none" stroke="#cfcfcf" strokeWidth="2" /></svg>
        </TaskIcon>
        <TaskIcon w="w-[64px]">
          <svg width="20" height="22" viewBox="0 0 20 22"><path d="M4 11H17A7.500 7.500 0 1 0 15 18" fill="none" stroke="#1b78e2" strokeWidth="4" /></svg>
        </TaskIcon>
        <TaskIcon w="w-[36px]">
          <svg width="26" height="28" viewBox="0 0 26 28"><path d="M7 14H20A7.500 7.500 0 1 0 18 21" fill="none" stroke="#1c9be8" strokeWidth="3.600" /><path d="M2 24C4 12 16 2 24 3c2 2 0 6-2 9" fill="none" stroke="#f0c030" strokeWidth="2" /></svg>
        </TaskIcon>
        <TaskIcon w="w-[59px]">
          <svg width="22" height="20" viewBox="0 0 22 20"><path d="M0 1h8l2 2h12v17H0z" fill="#f6d36b" /><path d="M0 6h22v4H0z" fill="#fbe79d" /><path d="M7 20v-7h8v7h-2v-5H9v5z" fill="#3aa4e6" /></svg>
        </TaskIcon>
        <TaskIcon w="w-[39px]" line="bg-[#76b9ed]">
          <svg width="24" height="30" viewBox="0 0 24 30"><path d="M20 2C8 2 2 8 2 15c0 8 7 13 13 12 6-1 8-7 5-11-3-3-8-2-9 1 3-1 5 0 5 2s-3 3-5 2-3-4-2-7c2-5 7-7 11-6z" fill="#1c8fe8" /></svg>
        </TaskIcon>
        <span className="w-[10px]" />
        <TaskIcon w="w-[40px]" line="bg-[#76b9ed]">
          <svg width="24" height="28" viewBox="0 0 24 28"><circle cx="12" cy="14" r="10" fill="#9bd04a" stroke="#dfeccf" strokeWidth="1.500" /><path d="M8 13.500H16A4.500 4.500 0 1 0 15 17.500" fill="none" stroke="#fff" strokeWidth="2" /><path d="M3 22C8 20 18 10 21 3" fill="none" stroke="#2c9a3c" strokeWidth="1.500" /></svg>
        </TaskIcon>
        <span className="w-[5px]" />
        <TaskIcon w="w-[48px]" active line="bg-[#76b9ed]">
          <div className="w-[24px] h-[28px] bg-[#1794ee] rounded-[4px] flex items-center justify-center"><AppMark s={18} /></div>
        </TaskIcon>
      </div>
      <div className="flex items-center ml-[136px] text-white">
        <span className="text-[12px] text-[#ddd] w-[32px] whitespace-nowrap">链接</span>
        <svg width="12" height="8" viewBox="0 0 12 8" className="ml-[2px]"><path d="M1 7l5-5.500L11 7" fill="none" stroke="#ddd" strokeWidth="1.200" /></svg>
        <svg width="16" height="14" viewBox="0 0 16 14" className="ml-[11px]"><rect x="2" y="5" width="13" height="8" fill="none" stroke="#ddd" /><rect x="3" y="6" width="9" height="6" fill="#ddd" /><path d="M3 0v5M6 0v5" stroke="#ddd" /></svg>
        <svg width="15" height="14" viewBox="0 0 15 14" className="ml-[9px]"><path d="M1 13a12 12 0 0112-12M4 13a9 9 0 019-9M7 13a6 6 0 016-6" fill="none" stroke="#bbb" /><circle cx="12" cy="12" r="1.500" fill="#ddd" /></svg>
        <svg width="16" height="14" viewBox="0 0 16 14" className="ml-[8px]"><path d="M1 5h3l4-4v12L4 9H1z" fill="none" stroke="#ddd" /><path d="M10 4c1 2 1 4 0 6M13 2c2 3 2 7 0 10" fill="none" stroke="#ddd" /></svg>
        <svg width="23" height="16" viewBox="0 0 23 16" className="ml-[7px]"><rect x=".5" y=".5" width="22" height="15" fill="none" stroke="#eee" /><path d="M3 4h17M3 7h17M3 10h17" stroke="#eee" strokeDasharray="1 1" /><path d="M6 13h11" stroke="#eee" /></svg>
        <span className="ml-[9px] text-[14px] text-white w-[20px]">中</span>
        <div className="ml-[9px] w-[15px] h-[16px] bg-[#f15a22] rounded-[2px] rotate-[-8deg] flex items-center justify-center text-white font-bold text-[13px] leading-none font-['Liberation_Sans'] shrink-0">S</div>
      </div>
      <div className="w-[70px] ml-[12px] flex flex-col items-center justify-center text-[13px] leading-[19px] text-[#e6e6e6] font-['Liberation_Sans'] shrink-0 whitespace-nowrap relative z-10">
        <span>21:39</span>
        <span>2018/2/20</span>
      </div>
      <div className="flex-1 bg-black relative -ml-[11px] flex items-start pl-[28px] pt-[12px]">
        <svg width="17" height="13" viewBox="0 0 17 13"><path d="M0 0h17v13H0z" fill="#fff" /><path d="M2 3h13M2 6h13M2 9h13" stroke="#333" /></svg>
        <div className="absolute left-[32px] top-[20px] w-[22px] h-[14px] rounded-full bg-[#3a3a3a] border border-[#888] flex items-center justify-center text-white text-[11px] font-bold font-['Liberation_Sans'] leading-none">20</div>
      </div>
    </div>
  );
}

export default function App() {
  return (
    <div className="relative w-[1366px] h-[768px] overflow-hidden bg-[#f5f5f5] flex flex-col" style={{ fontFamily: FONT }}>
      <Top />
      <div className="h-[624px] flex shrink-0 bg-[#f4f4f4]">
        <LeftCol />
        <div className="flex-1 ml-[7px] flex flex-col min-w-0">
          <Toolbar2 />
          <div className="flex-1 flex min-h-0">
            <MiddleTree />
            <div className="flex-1 ml-[2px] flex flex-col min-w-0 bg-white"><Props /></div>
          </div>
        </div>
      </div>
      <StatusBar />
      <Taskbar />
      <Scrollbar />
      <Dialog />
      <Sogou />
      <div className="absolute left-[886px] top-[-26px] w-[44px] h-[44px] rounded-full bg-[#32b34f] border-2 border-[#f0f0f0] shadow-[0_2px_5px_rgba(0,0,0,0.5)] flex items-end justify-center pb-[2px]">
        <span className="text-white text-[11px] font-bold font-['Liberation_Sans'] leading-[14px]">64</span>
      </div>
    </div>
  );
}
